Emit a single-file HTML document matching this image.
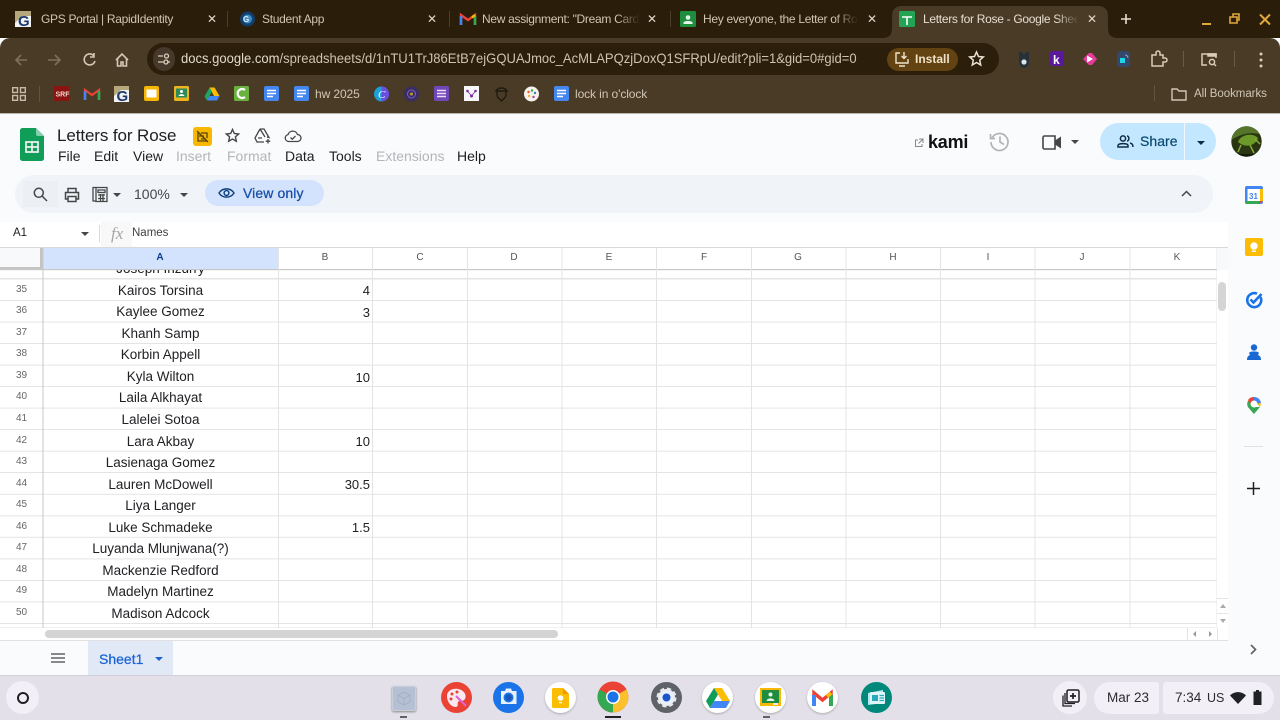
<!DOCTYPE html>
<html><head><meta charset="utf-8"><style>
*{box-sizing:border-box}
html,body{margin:0;padding:0;width:1280px;height:720px;overflow:hidden;background:#f9fbfd;font-family:"Liberation Sans",sans-serif}
.a{position:absolute;white-space:nowrap}
svg{position:absolute;overflow:visible}
.tab{font-size:12px;color:#d2c6b2;top:12px;line-height:14px;letter-spacing:-.3px}
.fade{overflow:hidden;-webkit-mask-image:linear-gradient(90deg,#000 85%,transparent);mask-image:linear-gradient(90deg,#000 85%,transparent)}
.x{font-size:12px;color:#e0d8c8;top:11px;line-height:16px}
.sep{width:1px;background:#4c3e2a}
.menu{font-size:14px;top:148px;line-height:17px;color:#1f1f1f}
.dis{color:#b4b5b8}
.c{left:43px;width:235px;text-align:center;font-size:13.5px;line-height:18px;color:#202124;margin-top:1px}
.n{left:278px;width:92px;text-align:right;font-size:13px;line-height:18px;color:#202124}
.r{left:0;width:43px;text-align:center;font-size:10px;line-height:12px;color:#666}
.h{top:252px;font-size:10px;line-height:12px;color:#555;text-align:center;width:20px}
.bm{font-size:12px;color:#cfc6b5;line-height:14px;top:87px;letter-spacing:-.1px}
.dock{width:31px;height:31px;border-radius:50%;top:682px}
.pill{background:#f3eff6;height:32px;top:682px}
</style></head><body>
<!-- Chrome frame -->
<div class="a" style="left:0;top:0;width:1280px;height:38px;background:#2a1d0a"></div>
<div class="a" style="left:0;top:38px;width:1280px;height:75px;background:#4a3b26;border-radius:10px 10px 0 0"></div>
<div class="a" style="left:892px;top:6px;width:216px;height:34px;background:#4a3b26;border-radius:9px 9px 0 0"></div>
<svg style="left:882px;top:28px" width="236" height="10"><path d="M0 10C7 10 10 7 10 0V10ZM236 10C229 10 226 7 226 0V10Z" fill="#4a3b26"/></svg>
<div class="a" style="left:0;top:113px;width:1280px;height:1px;background:#b9b6b0"></div>

<!-- tabs -->
<svg style="left:15px;top:11px" width="16" height="16"><rect width="16" height="16" fill="#f3f3f3"/><path d="M0 0H16V5H7L0 12Z" fill="#b7a77c"/><text x="3" y="15" font-size="15" font-weight="700" fill="#1d3a6e" font-family="Liberation Sans">G</text></svg>
<div class="a tab" style="left:41px">GPS Portal | RapidIdentity</div>
<div class="a x" style="left:207px">✕</div>
<div class="a sep" style="left:227px;top:11px;height:16px"></div>
<svg style="left:240px;top:11px" width="16" height="16"><circle cx="7.5" cy="8" r="7.5" fill="#123f6d"/><circle cx="7.5" cy="8" r="4.5" fill="#3c8fc4"/><text x="3" y="11" font-size="8" font-weight="700" fill="#dfeaf2" font-family="Liberation Sans">G</text></svg>
<div class="a tab" style="left:262px">Student App</div>
<div class="a x" style="left:427px">✕</div>
<div class="a sep" style="left:449px;top:11px;height:16px"></div>
<svg style="left:460px;top:12px" width="16" height="14"><path d="M1 13V3L8 8L15 3V13" fill="none" stroke="#ea4335" stroke-width="2.4"/><path d="M1 4V13" stroke="#4285f4" stroke-width="2.6"/><path d="M15 4V13" stroke="#34a853" stroke-width="2.6"/><path d="M12 5.5L15 3" stroke="#fbbc04" stroke-width="2.4"/></svg>
<div class="a tab fade" style="left:482px;width:158px">New assignment: "Dream Card</div>
<div class="a x" style="left:647px">✕</div>
<div class="a sep" style="left:670px;top:11px;height:16px"></div>
<svg style="left:680px;top:11px" width="16" height="16"><rect width="16" height="16" rx="1.5" fill="#1e8e3e"/><circle cx="8" cy="6.5" r="2.3" fill="#e6f4ea"/><path d="M3.5 13V11.5C4 9.5 12 9.5 12.5 11.5V13Z" fill="#e6f4ea"/></svg>
<div class="a tab fade" style="left:703px;width:155px">Hey everyone, the Letter of Rose</div>
<div class="a x" style="left:867px">✕</div>
<svg style="left:899px;top:11px" width="16" height="16"><rect width="16" height="16" rx="1.5" fill="#23a455"/><path d="M3 6H13M8 6V14" stroke="#fff" stroke-width="1.6"/></svg>
<div class="a tab fade" style="left:923px;width:156px;color:#e6decf">Letters for Rose - Google Sheets</div>
<div class="a x" style="left:1087px">✕</div>
<svg style="left:1120px;top:13px" width="12" height="12"><path d="M6 1V11M1 6H11" stroke="#e8dfd0" stroke-width="1.6"/></svg>
<svg style="left:1200px;top:12px" width="70" height="16"><path d="M2 12H11" stroke="#e0a93d" stroke-width="2"/><path d="M30 5H37V11H30ZM33 5V2H39V8H37" fill="none" stroke="#e0a93d" stroke-width="1.6"/><path d="M60 2.500L70 12.500M70 2.500L60 12.500" stroke="#e0a93d" stroke-width="2"/></svg>

<!-- toolbar -->
<svg style="left:14px;top:52px" width="125" height="16" fill="none" stroke-width="1.6"><path d="M13 7H2M7 2L2 7L7 12" stroke="#7d705c" transform="translate(0,1)"/><path d="M34 8H46M41 3L46 8L41 13" stroke="#7d705c"/><path d="M80 4A5.5 5.5 0 1 0 81 9M80 1V5H76" stroke="#d3c8b5"/><path d="M102 8L108 2L114 8M103.500 7V14H107V10H109V14H112.500V7" stroke="#d3c8b5"/></svg>
<div class="a" style="left:147px;top:43px;width:852px;height:32px;background:#2b1e0b;border-radius:16px"></div>
<div class="a" style="left:153px;top:47px;width:22px;height:24px;border-radius:12px;background:#46382a"></div>
<svg style="left:157px;top:52px" width="14" height="14" fill="none" stroke="#d8ceb9" stroke-width="1.3"><path d="M1 4H6M1 10H7M10 10H13"/><circle cx="9.500" cy="4" r="2"/><circle cx="9" cy="10" r="2"/></svg>
<div class="a" style="left:181px;top:51px;font-size:13.7px;line-height:16px;color:#cfc3ae;transform:scaleX(.952);transform-origin:0 0"><span style="color:#e2d9c8">docs.google.com</span>/spreadsheets/d/1nTU1TrJ86EtB7ejGQUAJmoc_AcMLAPQzjDoxQ1SFRpU/edit?pli=1&amp;gid=0#gid=0</div>
<div class="a" style="left:887px;top:48px;width:71px;height:23px;border-radius:12px;background:#644312"></div>
<svg style="left:894px;top:52px" width="16" height="15" fill="none" stroke="#f0e4cc" stroke-width="1.4"><path d="M6 1H2V11H14V7M5 14H11M10 0V6M7.500 4L10 6.500L12.500 4"/></svg>
<div class="a" style="left:915px;top:52px;font-size:12px;font-weight:700;line-height:15px;color:#efe2c8">Install</div>
<svg style="left:968px;top:50px" width="17" height="17" fill="none" stroke="#ebe3d3" stroke-width="1.5"><path d="M8.500 2L10.500 6.500L15.300 7L11.700 10.200L12.700 15L8.500 12.500L4.300 15L5.300 10.200L1.700 7L6.500 6.500Z"/></svg>
<svg style="left:1014px;top:50px" width="20" height="20"><path d="M5 2H8L10 5L12 2H15V12C15 15 13 18 10 18C7 18 5 15 5 12Z" fill="#26323b"/><circle cx="10" cy="12" r="2.600" fill="#dde3e8"/></svg>
<svg style="left:1049px;top:51px" width="16" height="16"><rect width="14" height="15" x="1" rx="2.500" fill="#5a189a"/><text x="4" y="13" font-size="12" font-weight="700" fill="#fff" font-family="Liberation Sans">k</text></svg>
<svg style="left:1082px;top:52px" width="16" height="14"><path d="M1 7L7 1H10L15 7L10 13H7Z" fill="#e73b9b"/><path d="M5 3.500L11 7L5 10.500Z" fill="#fff"/></svg>
<svg style="left:1116px;top:51px" width="16" height="16"><rect x="1" width="13" height="16" rx="3" fill="#33486b"/><rect x="4" y="7" width="5" height="5" fill="#20d5ea"/><path d="M9 4A3 3 0 0 1 12 7" stroke="#97a9c3" fill="none"/></svg>
<svg style="left:1150px;top:50px" width="18" height="18" fill="none" stroke="#d9cdb8" stroke-width="1.500"><path d="M2 5H6V3A2 2 0 0 1 10 3V5H13V8H15A2 2 0 0 1 15 12H13V16H2Z"/></svg>
<div class="a" style="left:1183px;top:51px;width:1px;height:16px;background:#6a5b44"></div>
<svg style="left:1200px;top:51px" width="18" height="17" fill="none" stroke="#d9cdb8" stroke-width="1.500"><path d="M7 14H2V3H16V7"/><path d="M8 3H16V5H8Z" fill="#d9cdb8"/><circle cx="12" cy="11" r="2.600"/><path d="M14 13L16 15"/></svg>
<div class="a" style="left:1234px;top:51px;width:1px;height:16px;background:#6a5b44"></div>
<svg style="left:1259px;top:52px" width="4" height="15" fill="#d9cdb8"><circle cx="2" cy="2" r="1.500"/><circle cx="2" cy="8" r="1.500"/><circle cx="2" cy="14" r="1.500"/></svg>

<!-- bookmarks -->
<svg style="left:12px;top:87px" width="14" height="14" fill="none" stroke="#c5bba9" stroke-width="1.400"><rect x=".7" y=".7" width="4.800" height="4.800"/><rect x="8.500" y=".7" width="4.800" height="4.800"/><rect x=".7" y="8.500" width="4.800" height="4.800"/><rect x="8.500" y="8.500" width="4.800" height="4.800"/></svg>
<div class="a" style="left:39px;top:86px;width:1px;height:16px;background:#625540"></div>
<svg style="left:54px;top:86px" width="16" height="16"><rect width="15" height="15" fill="#8a1411"/><text x="1.500" y="10.500" font-size="7" font-weight="700" fill="#f3dad3" font-family="Liberation Sans">SRF</text></svg>
<svg style="left:84px;top:88px" width="16" height="13"><path d="M1 12V2L8 7L15 2V12" fill="none" stroke="#ea4335" stroke-width="2.200"/><path d="M1 3V12" stroke="#4285f4" stroke-width="2.600"/><path d="M15 3V12" stroke="#34a853" stroke-width="2.600"/></svg>
<svg style="left:114px;top:86px" width="16" height="16"><rect width="15" height="16" fill="#f2f2f2"/><path d="M0 0H15V4H7L0 10Z" fill="#b7a77c"/><text x="2.500" y="15" font-size="15" font-weight="700" fill="#1d3a6e" font-family="Liberation Sans">G</text></svg>
<svg style="left:144px;top:86px" width="16" height="16"><rect width="15" height="15" rx="2" fill="#f6b704"/><rect x="2.500" y="3.500" width="10" height="8" fill="#fff"/></svg>
<svg style="left:174px;top:86px" width="16" height="16"><rect width="15" height="15" rx="1.500" fill="#eeb420"/><rect x="2" y="2.500" width="11" height="9" fill="#2e8b57"/><circle cx="7.500" cy="5.500" r="1.500" fill="#fff"/><path d="M4.500 10C5 7.500 10 7.500 10.500 10Z" fill="#fff"/></svg>
<svg style="left:204px;top:87px" width="16" height="14"><path d="M5.500 0.500H10.500L15.500 9H10Z" fill="#fbbc04"/><path d="M5.500 .5L.5 9.500L3 13.500L8 4.500Z" fill="#1fa463"/><path d="M3 13.500H13L15.500 9H5.500Z" fill="#4285f4"/></svg>
<svg style="left:234px;top:86px" width="16" height="16"><rect width="15" height="15" rx="1.500" fill="#6ab140"/><path d="M11 4A4.500 4.500 0 1 0 11 11" fill="none" stroke="#fff" stroke-width="2.200"/></svg>
<svg style="left:264px;top:86px" width="16" height="16"><rect width="15" height="15" rx="2" fill="#4587f0"/><path d="M3 4.500H12M3 7.500H12M3 10.500H9" stroke="#fff" stroke-width="1.500"/></svg>
<svg style="left:294px;top:86px" width="16" height="16"><rect width="15" height="15" rx="2" fill="#4587f0"/><path d="M3 4.500H12M3 7.500H12M3 10.500H9" stroke="#fff" stroke-width="1.500"/></svg>
<div class="a bm" style="left:315px">hw 2025</div>
<svg style="left:374px;top:86px" width="16" height="16"><circle cx="7.500" cy="8" r="7.500" fill="#1ca0d8"/><path d="M7.500 .5A7.500 7.500 0 0 1 7.500 15.500Z" fill="#6a4fdf"/><text x="4" y="12" font-size="11" font-style="italic" fill="#fff" font-family="Liberation Serif">C</text></svg>
<svg style="left:404px;top:86px" width="16" height="16"><circle cx="7.500" cy="8" r="7.500" fill="#3a2c66"/><circle cx="7.500" cy="8" r="4" fill="none" stroke="#7a66b5"/><circle cx="7.500" cy="8" r="1.500" fill="#c19b2f"/></svg>
<svg style="left:434px;top:86px" width="16" height="16"><rect width="15" height="15" rx="2" fill="#7248b9"/><path d="M3 4.500H12M3 7.500H12M3 10.500H12" stroke="#e8dff5" stroke-width="1.500"/></svg>
<svg style="left:464px;top:86px" width="16" height="16"><rect width="15" height="15" fill="#f7f6f8"/><circle cx="3.500" cy="5" r="1.300" fill="#7a2aa3"/><circle cx="11.500" cy="5" r="1.300" fill="#7a2aa3"/><circle cx="7.500" cy="10" r="1.500" fill="#7a2aa3"/><path d="M3.500 5L7.500 10L11.500 5" stroke="#7a2aa3" fill="none" stroke-width=".8"/></svg>
<svg style="left:494px;top:86px" width="16" height="16" fill="none" stroke="#1f1a10" stroke-width="1.400"><path d="M2 5C4 1 11 1 13 5ZM3 5V9C3 12 6 13 7.500 15C9 13 12 12 12 9V5"/></svg>
<svg style="left:524px;top:86px" width="16" height="16"><circle cx="7.500" cy="8" r="7.500" fill="#f5f2ed"/><circle cx="4.500" cy="6" r="1.200" fill="#e4572e"/><circle cx="8" cy="4.500" r="1.200" fill="#3fa34d"/><circle cx="11" cy="7" r="1.200" fill="#2e86ab"/><circle cx="5" cy="10" r="1.200" fill="#f2b134"/><circle cx="9.500" cy="11" r="1.200" fill="#c23b8e"/></svg>
<svg style="left:554px;top:86px" width="16" height="16"><rect width="15" height="15" rx="2" fill="#4587f0"/><path d="M3 4.500H12M3 7.500H12M3 10.500H9" stroke="#fff" stroke-width="1.500"/></svg>
<div class="a bm" style="left:575px">lock in o'clock</div>
<div class="a" style="left:1154px;top:85px;width:1px;height:16px;background:#625540"></div>
<svg style="left:1171px;top:87px" width="16" height="14" fill="none" stroke="#cfc6b5" stroke-width="1.400"><path d="M1 2H6L8 4H15V13H1Z"/></svg>
<div class="a bm" style="left:1194px;font-size:11.500px;letter-spacing:-.05px">All Bookmarks</div>

<!-- Docs header -->
<svg style="left:20px;top:128px" width="24" height="33"><path d="M2.500 0H16L24 8V30.500A2.500 2.500 0 0 1 21.500 33H2.500A2.500 2.500 0 0 1 0 30.500V2.500A2.500 2.500 0 0 1 2.500 0Z" fill="#0f9d58"/><path d="M16 0L24 8H18A2 2 0 0 1 16 6Z" fill="#87ceac"/><path d="M6 14H18V24H6ZM6 19H18M12 14V24" fill="none" stroke="#f1f1f1" stroke-width="1.700"/></svg>
<div class="a" style="left:57px;top:125px;font-size:17px;letter-spacing:-.1px;line-height:21px;color:#1f1f1f">Letters for Rose</div>
<div class="a" style="left:193px;top:127px;width:19px;height:19px;border-radius:3px;background:#f9b800"></div>
<svg style="left:196px;top:130px" width="13" height="13" fill="none" stroke="#594410" stroke-width="1.300"><path d="M1 1L12 12M2 3V11H11M5 3H11V8M3 6H8M5 9H10"/></svg>
<svg style="left:225px;top:128px" width="15" height="15" fill="none" stroke="#444746" stroke-width="1.400"><path d="M7.500 1.500L9.300 5.500L13.700 6L10.400 8.900L11.300 13.200L7.500 11L3.700 13.200L4.600 8.900L1.300 6L5.700 5.500Z"/></svg>
<svg style="left:254px;top:128px" width="18" height="16" fill="none" stroke="#444746" stroke-width="1.300"><path d="M6 1H10L15 9.500L13 9M6 1L1 10L3 14H10M6 1L11 9M4 10H8"/><path d="M14 11V15.500M11.700 13.200H16.300"/></svg>
<svg style="left:284px;top:129px" width="18" height="14" fill="none" stroke="#444746" stroke-width="1.300"><path d="M4.500 12.500A3.500 3.500 0 0 1 4 5.600A5 5 0 0 1 13.500 5.500A3.500 3.500 0 0 1 13.500 12.500Z"/><path d="M6.500 8.500L8.300 10.200L11.500 7"/></svg>
<div class="a menu" style="left:58px">File</div>
<div class="a menu" style="left:94px">Edit</div>
<div class="a menu" style="left:133px">View</div>
<div class="a menu dis" style="left:176px">Insert</div>
<div class="a menu dis" style="left:227px">Format</div>
<div class="a menu" style="left:285px">Data</div>
<div class="a menu" style="left:329px">Tools</div>
<div class="a menu dis" style="left:376px">Extensions</div>
<div class="a menu" style="left:457px">Help</div>

<svg style="left:914px;top:138px" width="10" height="10" fill="none" stroke="#888" stroke-width="1"><path d="M4 2H1.500V8.500H8V6M5 1H9V5M9 1L4.500 5.500"/></svg>
<div class="a" style="left:928px;top:132px;font-size:18px;font-weight:700;line-height:20px;color:#111;letter-spacing:-.2px">kami</div>
<svg style="left:989px;top:131px" width="21" height="21" fill="none" stroke="#b1b3b4" stroke-width="1.700"><path d="M3 7A8.500 8.500 0 1 1 2 11M1.500 3V7.500H6M11 5.500V11L15 13.500"/></svg>
<svg style="left:1042px;top:135px" width="20" height="15" fill="none" stroke="#444746" stroke-width="1.600"><path d="M2.500 1H13V14H2.500A1.500 1.500 0 0 1 1 12.500V2.500A1.500 1.500 0 0 1 2.500 1Z"/><path d="M13 5.500L19 1.500V13.500L13 9.500Z" fill="#444746" stroke="none"/></svg>
<svg style="left:1071px;top:140px" width="8" height="4"><path d="M0 0H8L4 4Z" fill="#444746"/></svg>
<div class="a" style="left:1100px;top:123px;width:116px;height:37px;border-radius:19px;background:#c2e7ff"></div>
<div class="a" style="left:1184px;top:123px;width:1px;height:37px;background:#f1f8fd"></div>
<svg style="left:1117px;top:135px" width="17" height="13" fill="none" stroke="#0f2e44" stroke-width="1.500"><circle cx="6" cy="3.500" r="2.600"/><path d="M1 12V10.500C1 8 11 8 11 10.500V12Z"/><path d="M10 1C12.500 1 12.500 6 10 6M13 8C15.500 8.500 16 10 16 12"/></svg>
<div class="a" style="left:1140px;top:133px;font-size:14px;font-weight:400;line-height:17px;color:#0b4a6f;letter-spacing:.05px;-webkit-text-stroke:.2px #0b4a6f">Share</div>
<svg style="left:1197px;top:141px" width="8" height="4"><path d="M0 0H8L4 4Z" fill="#062e47"/></svg>
<svg style="left:1231px;top:126px" width="31" height="31"><defs><clipPath id="av"><circle cx="15.500" cy="15.500" r="15.200"/></clipPath></defs><g clip-path="url(#av)"><rect width="31" height="31" fill="#2a3612"/><path d="M0 0H31V9C20 5 10 8 0 14Z" fill="#55752a"/><path d="M7 16C9 9 21 6 27 12C25 19 15 23 7 16Z" fill="#6c9a28"/><path d="M10 19L7 26M19 19L23 27M24 13L29 18" stroke="#85ab3a" stroke-width="1.500"/><path d="M0 28H31V31H0Z" fill="#141c08"/></g></svg>

<!-- toolbar pill -->
<div class="a" style="left:15px;top:175px;width:1198px;height:38px;border-radius:19px;background:#f0f4f9"></div>
<div class="a" style="left:23px;top:181px;width:35px;height:26px;background:#ecf0f5"></div>
<svg style="left:33px;top:187px" width="15" height="15" fill="none" stroke="#444746" stroke-width="1.500"><circle cx="5.800" cy="5.800" r="4.500"/><path d="M9 9L14 14"/></svg>
<svg style="left:64px;top:187px" width="16" height="16" fill="none" stroke="#444746" stroke-width="1.500"><path d="M4 5V1.500H12V5M4 12H1.500V5.500H14.500V12H12M4 9.500H12V14.500H4Z"/></svg>
<svg style="left:92px;top:186px" width="16" height="17" fill="none" stroke="#444746" stroke-width="1.300"><path d="M4 1.500H1V15H4"/><path d="M4 1.500H15V15.500H4ZM6 4H13V6.500H6ZM6 9H13M6 12.500H13M8.500 8V15M11 8V15" /></svg>
<svg style="left:113px;top:193px" width="8" height="4"><path d="M0 0H8L4 4Z" fill="#444746"/></svg>
<div class="a" style="left:134px;top:186px;font-size:14px;line-height:17px;color:#444746">100%</div>
<svg style="left:180px;top:193px" width="8" height="4"><path d="M0 0H8L4 4Z" fill="#444746"/></svg>
<div class="a" style="left:205px;top:180px;width:119px;height:26px;border-radius:13px;background:#d3e3fd"></div>
<svg style="left:218px;top:187px" width="17" height="12" fill="none" stroke="#0b3d78" stroke-width="1.400"><path d="M1 6C4.500 .5 12.500 .5 16 6C12.500 11.500 4.500 11.500 1 6Z"/><circle cx="8.500" cy="6" r="2.400"/></svg>
<div class="a" style="left:243px;top:185px;font-size:14px;font-weight:400;line-height:17px;color:#174ea6;-webkit-text-stroke:.25px #174ea6;letter-spacing:.1px">View only</div>
<svg style="left:1181px;top:190px" width="11" height="7" fill="none" stroke="#444746" stroke-width="1.500"><path d="M1 6L5.500 1.500L10 6"/></svg>

<!-- formula bar -->
<div class="a" style="left:0;top:222px;width:1228px;height:25px;background:#fff"></div>
<div class="a" style="left:13px;top:226px;font-size:11.500px;line-height:14px;color:#202124">A1</div>
<svg style="left:81px;top:232px" width="8" height="4"><path d="M0 0H8L4 4Z" fill="#444746"/></svg>
<div class="a" style="left:99px;top:225px;width:1px;height:17px;background:#d9d9d9"></div>
<div class="a" style="left:101px;top:222px;width:31px;height:25px;background:#f8f8f8"></div>
<div class="a" style="left:111px;top:224px;font-family:'Liberation Serif',serif;font-style:italic;font-size:17px;line-height:19px;color:#a5a5a5">fx</div>
<div class="a" style="left:132px;top:226px;font-size:11.500px;line-height:14px;color:#3c4043">Names</div>

<!-- sheet -->
<div class="a" style="left:0;top:247px;width:1228px;height:394px;background:#fff"></div>
<div class="a" style="left:0;top:247px;width:43px;height:23px;background:#f8f9fa"></div>
<div class="a" style="left:43px;top:248px;width:235px;height:22px;background:#d3e3fd"></div>
<div class="a" style="left:0;top:270px;width:43px;height:8px;overflow:hidden"><div class="a r" style="top:-8px">34</div></div>
<svg style="left:0;top:0;pointer-events:none" width="1280" height="720">
<rect x="0" y="247" width="1228" height="1" fill="#d9d9d9"/>
<rect x="40" y="248" width="3" height="22" fill="#c4c4c4"/>
<rect x="0" y="267" width="40" height="3" fill="#c4c4c4"/>
<rect x="0" y="269" width="1217" height="1.200" fill="#c7c7c7"/>
<g fill="#e4e4e4">
<rect x="0" y="278" width="1217" height="1.500"/>
<rect x="0" y="300" width="1217" height="1"/><rect x="0" y="321.500" width="1217" height="1"/><rect x="0" y="343" width="1217" height="1"/><rect x="0" y="364.600" width="1217" height="1"/><rect x="0" y="386" width="1217" height="1"/><rect x="0" y="407.600" width="1217" height="1"/><rect x="0" y="429" width="1217" height="1"/><rect x="0" y="450.700" width="1217" height="1"/><rect x="0" y="472" width="1217" height="1"/><rect x="0" y="493.800" width="1217" height="1"/><rect x="0" y="515.300" width="1217" height="1"/><rect x="0" y="536.800" width="1217" height="1"/><rect x="0" y="558.400" width="1217" height="1"/><rect x="0" y="580" width="1217" height="1"/><rect x="0" y="601.400" width="1217" height="1"/><rect x="0" y="623" width="1217" height="1"/>
<rect x="278" y="248" width="1" height="380"/><rect x="372" y="248" width="1" height="380"/><rect x="467" y="248" width="1" height="380"/><rect x="561.500" y="248" width="1" height="380"/><rect x="656" y="248" width="1" height="380"/><rect x="751" y="248" width="1" height="380"/><rect x="845.500" y="248" width="1" height="380"/><rect x="940" y="248" width="1" height="380"/><rect x="1034.500" y="248" width="1" height="380"/><rect x="1129.500" y="248" width="1" height="380"/><rect x="1216.500" y="248" width="1" height="380"/>
</g>
<rect x="42.500" y="248" width="1" height="380" fill="#c7c7c7"/>
<rect x="0" y="627.500" width="1228" height="1" fill="#e1e1e1"/>
<rect x="0" y="640" width="1228" height="1" fill="#e1e1e1"/>
</svg>
<div class="a h" style="left:150px;color:#0b3d91;font-weight:700">A</div>
<div class="a h" style="left:315px">B</div>
<div class="a h" style="left:410px">C</div>
<div class="a h" style="left:504px">D</div>
<div class="a h" style="left:599px">E</div>
<div class="a h" style="left:694px">F</div>
<div class="a h" style="left:788px">G</div>
<div class="a h" style="left:883px">H</div>
<div class="a h" style="left:978px">I</div>
<div class="a h" style="left:1072px">J</div>
<div class="a h" style="left:1167px">K</div>

<div class="a" style="left:43px;top:270px;width:235px;height:8px;overflow:hidden"><div class="a c" style="left:0;top:-11px">Joseph Inzurry</div></div>
<div class="a r" style="top:284px">35</div><div class="a c" style="top:281px">Kairos Torsina</div><div class="a n" style="top:282px">4</div>
<div class="a r" style="top:305px">36</div><div class="a c" style="top:302px">Kaylee Gomez</div><div class="a n" style="top:304px">3</div>
<div class="a r" style="top:327px">37</div><div class="a c" style="top:324px">Khanh Samp</div>
<div class="a r" style="top:348px">38</div><div class="a c" style="top:345px">Korbin Appell</div>
<div class="a r" style="top:370px">39</div><div class="a c" style="top:367px">Kyla Wilton</div><div class="a n" style="top:369px">10</div>
<div class="a r" style="top:391px">40</div><div class="a c" style="top:388px">Laila Alkhayat</div>
<div class="a r" style="top:413px">41</div><div class="a c" style="top:410px">Lalelei Sotoa</div>
<div class="a r" style="top:435px">42</div><div class="a c" style="top:432px">Lara Akbay</div><div class="a n" style="top:433px">10</div>
<div class="a r" style="top:456px">43</div><div class="a c" style="top:453px">Lasienaga Gomez</div>
<div class="a r" style="top:478px">44</div><div class="a c" style="top:475px">Lauren McDowell</div><div class="a n" style="top:476px">30.5</div>
<div class="a r" style="top:499px">45</div><div class="a c" style="top:496px">Liya Langer</div>
<div class="a r" style="top:521px">46</div><div class="a c" style="top:518px">Luke Schmadeke</div><div class="a n" style="top:519px">1.5</div>
<div class="a r" style="top:542px">47</div><div class="a c" style="top:539px">Luyanda Mlunjwana(?)</div>
<div class="a r" style="top:564px">48</div><div class="a c" style="top:561px">Mackenzie Redford</div>
<div class="a r" style="top:585px">49</div><div class="a c" style="top:582px">Madelyn Martinez</div>
<div class="a r" style="top:607px">50</div><div class="a c" style="top:604px">Madison Adcock</div>

<!-- scrollbars -->
<div class="a" style="left:1217px;top:248px;width:11px;height:392px;background:#fff"></div>
<div class="a" style="left:1217px;top:248px;width:11px;height:22px;background:#f8f9fa"></div>
<div class="a" style="left:1218px;top:282px;width:8px;height:29px;border-radius:4px;background:#d5d5d5"></div>
<div class="a" style="left:1217px;top:598px;width:11px;height:1px;background:#e4e4e4"></div>
<div class="a" style="left:1217px;top:613px;width:11px;height:1px;background:#e4e4e4"></div>
<svg style="left:1220px;top:604px" width="6" height="20"><path d="M0 4L3 0L6 4Z" fill="#aaa"/><path d="M0 15H6L3 19Z" fill="#aaa"/></svg>
<div class="a" style="left:0;top:628px;width:1228px;height:12px;background:#fff"></div>
<div class="a" style="left:45px;top:630px;width:513px;height:8px;border-radius:4px;background:#d4d4d4"></div>
<div class="a" style="left:1187px;top:628px;width:1px;height:12px;background:#e4e4e4"></div>
<div class="a" style="left:1217px;top:628px;width:1px;height:12px;background:#e4e4e4"></div>
<svg style="left:1193px;top:631px" width="20" height="7"><path d="M3 0V6L0 3Z" fill="#999"/><path d="M16 0V6L19 3Z" fill="#999"/></svg>

<!-- side panel -->
<svg style="left:1245px;top:186px" width="18" height="18"><rect width="18" height="18" rx="2" fill="#4285f4"/><rect x="2.500" y="3" width="13" height="12.500" fill="#fff"/><path d="M0 15H14V18H2A2 2 0 0 1 0 16Z" fill="#34a853"/><path d="M14 15H18L14 18Z" fill="#ea4335"/><path d="M15 3H18V15H15Z" fill="#fbbc04"/><text x="4" y="13" font-size="8" font-weight="700" fill="#4285f4" font-family="Liberation Sans">31</text></svg>
<svg style="left:1245px;top:238px" width="18" height="18"><rect width="18" height="18" rx="2" fill="#fbbc04"/><circle cx="9" cy="8" r="3.700" fill="#fff"/><rect x="7" y="12.500" width="4" height="1.500" fill="#fff"/></svg>
<svg style="left:1245px;top:291px" width="18" height="18" fill="none"><path d="M15.500 6A7 7 0 1 1 12 2.700" stroke="#1a73e8" stroke-width="2.600"/><path d="M5.500 8.500L8.500 11.500L16.500 3" stroke="#1a73e8" stroke-width="2.600"/></svg>
<svg style="left:1247px;top:344px" width="14" height="16"><circle cx="7" cy="3.500" r="3.200" fill="#1967d2"/><path d="M0 16C0 13 1 12 3 11C1 8 3 7.500 7 7.500C11 7.500 13 8 11 11C13 12 14 13 14 16Z" fill="#1967d2"/></svg>
<svg style="left:1246px;top:396px" width="16" height="18"><path d="M8 1A7 7 0 0 0 2 11L8 18Z" fill="#ea4335"/><path d="M8 1A7 7 0 0 1 14 11L8 4Z" fill="#fbbc04"/><path d="M2 5A7 7 0 0 0 2 11L8 18L14 11H8Z" fill="#34a853"/><path d="M2 4A7 7 0 0 1 8 1V6Z" fill="#ea4335"/><path d="M8 1A7 7 0 0 1 15 7L8 8Z" fill="#4285f4"/><circle cx="8" cy="8" r="3.500" fill="#fff"/></svg>
<div class="a" style="left:1244px;top:446px;width:19px;height:1px;background:#dfe1e4"></div>
<svg style="left:1247px;top:482px" width="13" height="13"><path d="M6.500 0V13M0 6.500H13" stroke="#1f1f1f" stroke-width="1.500"/></svg>
<svg style="left:1250px;top:644px" width="7" height="11" fill="none" stroke="#606368" stroke-width="1.700"><path d="M1 1L5.500 5.500L1 10"/></svg>

<!-- sheet bar -->
<svg style="left:51px;top:653px" width="14" height="10"><path d="M0 1H14M0 5H14M0 9H14" stroke="#444746" stroke-width="1.300"/></svg>
<div class="a" style="left:88px;top:641px;width:85px;height:34px;background:#e1e9f7"></div>
<div class="a" style="left:99px;top:651px;font-size:14px;font-weight:400;line-height:16px;color:#1a62d6;-webkit-text-stroke:.25px #1a62d6">Sheet1</div>
<svg style="left:155px;top:657px" width="8" height="4"><path d="M0 0H8L4 4Z" fill="#1a62d6"/></svg>

<!-- shelf -->
<div class="a" style="left:0;top:675px;width:1280px;height:45px;background:#e3e0ea;border-top:1px solid #d3d0d9"></div>
<div class="a" style="left:6px;top:681px;width:33px;height:33px;border-radius:50%;background:#f3eff6"></div>
<div class="a" style="left:17px;top:692px;width:12px;height:12px;border-radius:50%;border:2px solid #202124"></div>

<div class="a" style="left:392px;top:686px;width:24px;height:25px;border-radius:2px;background:#b6c0d4;border:1px solid #c9cfdb;box-shadow:0 1px 2px #888"></div>
<svg style="left:397px;top:691px" width="14" height="15" fill="none" stroke="#a6b0c4" stroke-width="1"><path d="M7 1L13 4V11L7 14L1 11V4ZM1 4L7 7.500L13 4M7 7.500V14"/></svg>
<div class="a" style="left:400px;top:716px;width:7px;height:2px;background:#5f6368"></div>

<div class="a dock" style="left:441px;background:#ea4335"></div>
<svg style="left:441px;top:682px" width="31" height="31"><path d="M6 14C6 9 11 6 17 7C23 8 26 13 24 17C22 20 18 18 17 20C16 22 18 24 15 25C10 25 6 20 6 14Z" fill="#fce8f0"/><circle cx="11" cy="12" r="1.500" fill="#ea4335"/><circle cx="16" cy="10" r="1.500" fill="#ea4335"/><circle cx="10" cy="17" r="1.500" fill="#ea4335"/><path d="M15 14L25 24" stroke="#e35fd2" stroke-width="2"/></svg>

<div class="a dock" style="left:493px;background:#1a73e8"></div>
<svg style="left:493px;top:682px" width="31" height="31"><path d="M8 9H12L13 6.500H18L19 9H23.500V22H8Z" fill="#e8f0fe"/><circle cx="15.500" cy="15.500" r="5" fill="#1a73e8"/><circle cx="15.500" cy="15.500" r="3.200" fill="#1558b8"/></svg>

<div class="a dock" style="left:545px;background:#fff;box-shadow:0 1px 2px #aaa"></div>
<svg style="left:552px;top:688px" width="17" height="20"><path d="M0 1.500A1.500 1.500 0 0 1 1.500 0H11L17 6V18.500A1.500 1.500 0 0 1 15.500 20H1.500A1.500 1.500 0 0 1 0 18.500Z" fill="#fbbc04"/><path d="M11 0L17 6H11Z" fill="#f29900"/><circle cx="8.500" cy="10" r="2.800" fill="#fff"/><rect x="7" y="14" width="3" height="1.300" fill="#fff"/></svg>

<svg style="left:597px;top:681px" width="32" height="32"><circle cx="16" cy="16" r="15.500" fill="#ea4335"/><path d="M16 16L29.500 8.500A15.500 15.500 0 0 1 16 31.500Z" fill="#fbc02d"/><path d="M16 16L16 31.500A15.500 15.500 0 0 1 2.500 8.500Z" fill="#34a853"/><circle cx="16" cy="16" r="7" fill="#fff"/><circle cx="16" cy="16" r="5.500" fill="#1a73e8"/></svg>
<div class="a" style="left:605px;top:716px;width:16px;height:2px;background:#202124"></div>

<div class="a dock" style="left:651px;background:#5f6368"></div>
<svg style="left:651px;top:682px" width="31" height="31"><circle cx="15.500" cy="15.500" r="8.500" fill="#e8eaed" stroke="#e8eaed" stroke-width="3" stroke-dasharray="4 2.700"/><circle cx="15.500" cy="15.500" r="7" fill="#e8f0fe"/><circle cx="15.500" cy="15.500" r="4" fill="#1a56c8"/></svg>

<div class="a dock" style="left:702px;background:#fff;box-shadow:0 1px 2px #aaa"></div>
<svg style="left:706px;top:688px" width="24" height="20"><path d="M8 0H16L24 13H16Z" fill="#fbbc04"/><path d="M8 0L0 13L4 20L12 6.500Z" fill="#0f9d58"/><path d="M4 20H20L24 13H8Z" fill="#4285f4"/></svg>

<div class="a dock" style="left:755px;background:#fff;box-shadow:0 1px 2px #aaa"></div>
<svg style="left:760px;top:688px" width="21" height="19"><rect width="21" height="18" fill="#f9b707"/><rect x="2" y="2" width="17" height="13" fill="#1e8e3e"/><circle cx="10.500" cy="6.500" r="2" fill="#e8f5e9"/><path d="M6.500 13C7 9.500 14 9.500 14.500 13Z" fill="#e8f5e9"/><rect x="13" y="15" width="5" height="2" fill="#e8e8e8"/></svg>
<div class="a" style="left:763px;top:716px;width:7px;height:2px;background:#5f6368"></div>

<div class="a dock" style="left:807px;background:#fff;box-shadow:0 1px 2px #aaa"></div>
<svg style="left:812px;top:690px" width="21" height="17"><path d="M2 16V3L10.500 10L19 3V16" fill="none" stroke="#ea4335" stroke-width="3.500"/><path d="M2 5V16" stroke="#4285f4" stroke-width="4"/><path d="M19 5V16" stroke="#34a853" stroke-width="4"/><path d="M15 6.500L19 3" stroke="#fbbc04" stroke-width="3.500"/></svg>

<div class="a dock" style="left:861px;background:#00897b"></div>
<svg style="left:861px;top:682px" width="31" height="31"><path d="M7 11L22 8V21L7 23Z" fill="#b2ebf2"/><rect x="9" y="10" width="15" height="12" rx="1" fill="#e0f7fa"/><rect x="11" y="13" width="6" height="6" fill="#29a9bd"/><path d="M18.500 13.500H23M18.500 16H23M18.500 18.500H23" stroke="#29a9bd" stroke-width="1.200"/></svg>

<div class="a" style="left:1053px;top:681px;width:34px;height:33px;border-radius:50%;background:#f3eff6"></div>
<svg style="left:1062px;top:689px" width="18" height="18" fill="none" stroke="#202124" stroke-width="1.500"><rect x="5" y="1" width="12" height="12" rx="1.500"/><path d="M11 4V10M8 7H14" stroke-width="1.700"/><path d="M3 4V14.500H13M1 6.500V17H10" stroke-width="1.300"/></svg>
<div class="a pill" style="left:1094px;width:65px;border-radius:16px 3px 3px 16px"></div>
<div class="a" style="left:1107px;top:690px;font-size:13.500px;line-height:16px;color:#2b2b30">Mar 23</div>
<div class="a pill" style="left:1163px;width:111px;border-radius:3px 16px 16px 3px"></div>
<div class="a" style="left:1175px;top:690px;font-size:13.500px;line-height:16px;color:#2b2b30">7:34</div>
<div class="a" style="left:1207px;top:690px;font-size:12.500px;line-height:16px;color:#2b2b30">US</div>
<svg style="left:1230px;top:692px" width="16" height="12"><path d="M0 3.500C4 -1 12 -1 16 3.500L8 12Z" fill="#202124"/></svg>
<svg style="left:1253px;top:690px" width="9" height="15"><path d="M3 0H6V1.500H8.500V15H.5V1.500H3Z" fill="#202124"/></svg>
</body></html>
